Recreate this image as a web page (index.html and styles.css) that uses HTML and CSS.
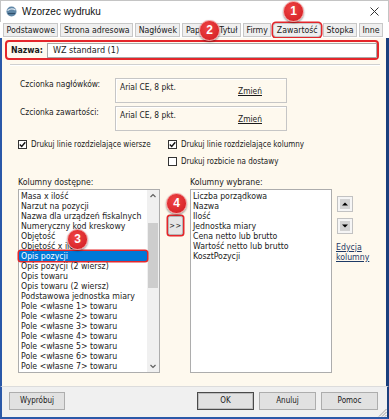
FILE: index.html
```html
<!DOCTYPE html>
<html lang="pl">

<head>
    <meta charset="UTF-8">
    <meta name="viewport" content="width=device-width, initial-scale=1.0">
    <title>Wzorzec wydruku</title>
    <link rel="stylesheet" href="styles.css">
</head>

<body>
    <div class="window">
        <div class="titlebar">
            <svg class="app-icon" width="11" height="11" viewBox="0 0 11 11">
                <circle cx="5.5" cy="5.5" r="5" fill="#5f86a6" />
                <path d="M1.5 4.5 Q5.5 1.5 9.5 4" stroke="#dfe9f2" stroke-width="1.4" fill="none" />
                <path d="M2 7.5 H9" stroke="#2f4f6c" stroke-width="1.2" />
            </svg>
            <span class="title">Wzorzec wydruku</span>
            <svg class="close" width="9" height="9" viewBox="0 0 9 9">
                <path d="M0.5 0.5 L8.5 8.5 M8.5 0.5 L0.5 8.5" stroke="#333" stroke-width="1" />
            </svg>
        </div>

        <div class="tabs">
            <span class="tab">Podstawowe</span>
            <span class="tab">Strona adresowa</span>
            <span class="tab">Nagłówek</span>
            <span class="tab">Papier</span>
            <span class="tab">Tytuł</span>
            <span class="tab">Firmy</span>
            <span class="tab marked">Zawartość</span>
            <span class="tab">Stopka</span>
            <span class="tab">Inne</span>
        </div>

        <div class="page">
            <div class="name-row">
                <b class="name-label">Nazwa:</b>
                <div class="input">WZ standard (1)</div>
            </div>
            <div class="sep"></div>

            <div class="fonts">
                <span class="font-label">Czcionka nagłówków:</span>
                <div class="font-box"><span>Arial CE, 8 pkt.</span><a href="#" class="link">Zmień</a></div>
                <span class="font-label">Czcionka zawartości:</span>
                <div class="font-box"><span>Arial CE, 8 pkt.</span><a href="#" class="link">Zmień</a></div>
            </div>

            <div class="checks">
                <label class="check"><span class="box"><svg width="7" height="7" viewBox="0 0 7 7"><path d="M0.8 3.6 L2.7 5.5 L6.3 1.3" stroke="#111" stroke-width="1.4" fill="none" /></svg></span>Drukuj linie rozdzielające wiersze</label>
                <label class="check"><span class="box"><svg width="7" height="7" viewBox="0 0 7 7"><path d="M0.8 3.6 L2.7 5.5 L6.3 1.3" stroke="#111" stroke-width="1.4" fill="none" /></svg></span>Drukuj linie rozdzielające kolumny</label>
                <span></span>
                <label class="check"><span class="box"></span>Drukuj rozbicie na dostawy</label>
            </div>

            <div class="columns">
                <span class="col-label">Kolumny dostępne:</span>
                <span></span>
                <span class="col-label">Kolumny wybrane:</span>
                <span></span>

                <div class="list">
                    <div class="items">
                        <div class="item">Masa x ilość</div>
                        <div class="item">Narzut na pozycji</div>
                        <div class="item">Nazwa dla urządzeń fiskalnych</div>
                        <div class="item">Numeryczny kod kreskowy</div>
                        <div class="item">Objętość</div>
                        <div class="item">Objętość x ilość</div>
                        <div class="item selected">Opis pozycji</div>
                        <div class="item">Opis pozycji (2 wiersz)</div>
                        <div class="item">Opis towaru</div>
                        <div class="item">Opis towaru (2 wiersz)</div>
                        <div class="item">Podstawowa jednostka miary</div>
                        <div class="item">Pole &lt;własne 1&gt; towaru</div>
                        <div class="item">Pole &lt;własne 2&gt; towaru</div>
                        <div class="item">Pole &lt;własne 3&gt; towaru</div>
                        <div class="item">Pole &lt;własne 4&gt; towaru</div>
                        <div class="item">Pole &lt;własne 5&gt; towaru</div>
                        <div class="item">Pole &lt;własne 6&gt; towaru</div>
                        <div class="item">Pole &lt;własne 7&gt; towaru</div>
                        <div class="item">Pole &lt;własne 8&gt; towaru</div>
                    </div>
                    <div class="scroll">
                        <svg class="scroll-arrow" width="12" height="12" viewBox="0 0 12 12"><path d="M3.5 7 L6 4.5 L8.5 7" stroke="#606060" stroke-width="1.2" fill="none" /></svg>
                        <div class="thumb"></div>
                        <svg class="scroll-arrow bottom" width="12" height="12" viewBox="0 0 12 12"><path d="M3.5 5 L6 7.5 L8.5 5" stroke="#606060" stroke-width="1.2" fill="none" /></svg>
                    </div>
                </div>

                <div class="mid">
                    <button class="move">&gt;&gt;</button>
                </div>

                <div class="list">
                    <div class="items">
                        <div class="item">Liczba porządkowa</div>
                        <div class="item">Nazwa</div>
                        <div class="item">Ilość</div>
                        <div class="item">Jednostka miary</div>
                        <div class="item">Cena netto lub brutto</div>
                        <div class="item">Wartość netto lub brutto</div>
                        <div class="item">KosztPozycji</div>
                    </div>
                </div>

                <div class="side">
                    <button class="arrow-btn"><svg width="10" height="10" viewBox="0 0 10 10"><rect width="10" height="10" fill="#d2d2d2" /><path d="M2 6.5 L5 3.5 L8 6.5 Z" fill="#000" /></svg></button>
                    <button class="arrow-btn"><svg width="10" height="10" viewBox="0 0 10 10"><rect width="10" height="10" fill="#d2d2d2" /><path d="M2 3.5 L5 6.5 L8 3.5 Z" fill="#000" /></svg></button>
                    <a href="#" class="edit">Edycja<br>kolumny</a>
                </div>
            </div>
        </div>

        <div class="footer">
            <button class="btn">Wypróbuj</button>
            <button class="btn default">OK</button>
            <button class="btn">Anuluj</button>
            <button class="btn">Pomoc</button>
            <svg class="grip" width="9" height="9" viewBox="0 0 9 9">
                <path d="M8.5 1 L1 8.5 M8.5 4 L4 8.5 M8.5 7 L7 8.5" stroke="#a0a0a0" stroke-width="1" />
            </svg>
        </div>

        <span class="badge b1">1</span>
        <span class="badge b2">2</span>
        <span class="badge b3">3</span>
        <span class="badge b4">4</span>
    </div>
</body>

</html>
```

FILE: styles.css
```css
body {
    margin: 0;
    padding: 0;
}

.window {
    position: relative;
    width: 389px;
    height: 419px;
    display: flex;
    flex-direction: column;
    overflow: hidden;
    background-color: #fff;
    font-family: "DejaVu Sans Condensed", "DejaVu Sans", sans-serif;
    font-stretch: condensed;
    font-size: 8.7px;
    line-height: 10px;
    color: #1a1a1a;
}

.titlebar {
    box-sizing: border-box;
    height: 22px;
    display: flex;
    align-items: center;
    padding: 0 9px 0 5px;
    border: 1px solid #c4c4c4;
    border-bottom: 0;
}

.title {
    margin-left: 5px;
    font-family: "Liberation Sans", sans-serif;
    font-stretch: normal;
    font-size: 10px;
    color: #111;
}

.close {
    margin-left: auto;
}

.tabs {
    height: 16px;
    box-sizing: border-box;
    display: flex;
    gap: 2px;
    padding: 1px 0 1px 3px;
}

.tab {
    box-sizing: border-box;
    height: 14px;
    line-height: 12px;
    padding: 0 2.5px;
    border: 1px solid #c8c8c8;
    background-color: #efefef;
    white-space: nowrap;
}

.tab.marked {
    border-radius: 3px;
    box-shadow: 0 0 0 1.5px #e4262b;
}

.page {
    flex: 1;
    display: flex;
    flex-direction: column;
    background-color: #fef9ee;
    border-left: 2px solid #2a58a8;
    border-right: 3px solid #1b3f7d;
}

.name-row {
    box-sizing: border-box;
    height: 20px;
    margin: 2px 7px 0 3px;
    padding-left: 4px;
    display: flex;
    align-items: center;
    border: 2px solid #e4262b;
    border-radius: 4px;
}

.name-label {
    width: 36px;
}

.input {
    flex: 1;
    box-sizing: border-box;
    height: 15px;
    line-height: 13px;
    padding-left: 5px;
    border: 1px solid #a9a9a9;
    background-color: #fff;
    font-size: 9px;
}

.sep {
    margin: 4px 6px 0 8px;
    border-top: 1px solid #d0d0d0;
    border-bottom: 1px solid #fff;
}

.fonts {
    display: grid;
    grid-template-columns: 95px 172px;
    grid-auto-rows: 25px;
    row-gap: 3px;
    margin-top: 12px;
    padding-left: 18px;
    font-size: 8.4px;
}

.font-label {
    padding-top: 1px;
}

.font-box {
    display: flex;
    justify-content: space-between;
    align-items: flex-start;
    padding: 3px 24px 0 4px;
    border: 1px solid #c6c6c6;
    box-shadow: inset 1px 1px 0 #fff;
}

.font-box .link {
    margin-top: 4px;
}

.link {
    color: #1a1a1a;
    text-decoration: underline;
}

.checks {
    display: grid;
    grid-template-columns: 150px auto;
    row-gap: 8px;
    margin-top: 9px;
    padding-left: 16px;
    font-size: 8px;
}

.check {
    height: 9px;
    display: flex;
    align-items: center;
    gap: 4px;
    white-space: nowrap;
}

.box {
    box-sizing: border-box;
    width: 9px;
    height: 9px;
    display: flex;
    align-items: center;
    justify-content: center;
    border: 1px solid #333;
    background-color: #fff;
}

.columns {
    display: grid;
    grid-template-columns: 142px 30px 142px 1fr;
    grid-template-rows: 12px 184px;
    margin-top: 11px;
    padding-left: 16px;
}

.list {
    display: flex;
    border: 1px solid #adadad;
    background-color: #fff;
}

.items {
    flex: 1;
    padding-top: 1px;
    clip-path: inset(-3px -3px 0 -3px);
}

.item {
    height: 10px;
    line-height: 10px;
    padding-left: 2px;
    white-space: nowrap;
}

.item.selected {
    background-color: #0078d7;
    color: #fff;
    border-radius: 2px;
    box-shadow: 0 0 0 1.5px #e4262b;
}

.scroll {
    width: 12px;
    display: flex;
    flex-direction: column;
    background-color: #f0f0f0;
}

.scroll-arrow.bottom {
    margin-top: auto;
}

.thumb {
    height: 65px;
    margin: 21px 1px 0;
    background-color: #cdcdcd;
}

.mid {
    padding: 27px 0 0 8px;
}

.move {
    box-sizing: border-box;
    width: 15px;
    height: 19px;
    padding: 0;
    border: 1px solid #b5b5b5;
    border-radius: 2px;
    background-color: #e6e6e6;
    box-shadow: 0 0 0 1.5px #e4262b;
    font: inherit;
    font-size: 7.5px;
    letter-spacing: 0.5px;
    color: #222;
}

.side {
    display: flex;
    flex-direction: column;
    align-items: flex-start;
    gap: 6px;
    padding: 7px 0 0 5px;
}

.arrow-btn {
    box-sizing: border-box;
    width: 16px;
    height: 16px;
    padding: 0;
    display: flex;
    align-items: center;
    justify-content: center;
    border: 1px solid #c2c2c2;
    background-color: #f5f5f5;
}

.edit {
    margin: 2px 0 0 -1px;
    color: #1e3a66;
    text-decoration: underline;
}

.footer {
    position: relative;
    box-sizing: border-box;
    height: 33px;
    display: flex;
    gap: 5px;
    padding: 5px 9px 0 7px;
    background-color: #f0f0f0;
    border-top: 1px solid #dcdcdc;
    border-left: 2px solid #2a58a8;
    border-right: 2px solid #1b3f7d;
    border-bottom: 2px solid #2a58a8;
}

.btn {
    box-sizing: border-box;
    width: 57px;
    height: 18px;
    padding: 0;
    border: 1px solid #adadad;
    background-color: #e1e1e1;
    font: inherit;
    font-size: 8px;
    color: #1a1a1a;
}

.btn:first-child {
    width: 56px;
}

.btn.default {
    margin-left: auto;
    border-color: #4a4a4a;
    box-shadow: inset 0 0 0 1px #bdbdbd;
}

.grip {
    position: absolute;
    right: 0;
    bottom: 0;
}

.badge {
    position: absolute;
    box-sizing: border-box;
    width: 21px;
    height: 21px;
    border-radius: 50%;
    border: 1.5px solid #f49a9a;
    background: radial-gradient(circle at 40% 35%, #ef4444, #cf1b20);
    box-shadow: 0 1px 2px rgba(0, 0, 0, .45);
    color: #fff;
    font-family: "Liberation Sans", sans-serif;
    font-stretch: normal;
    font-weight: bold;
    font-size: 12px;
    line-height: 18px;
    text-align: center;
}

.b1 {
    left: 283px;
    top: 1px;
}

.b2 {
    left: 199px;
    top: 20px;
}

.b3 {
    left: 67px;
    top: 229px;
}

.b4 {
    left: 166px;
    top: 193px;
}
```
